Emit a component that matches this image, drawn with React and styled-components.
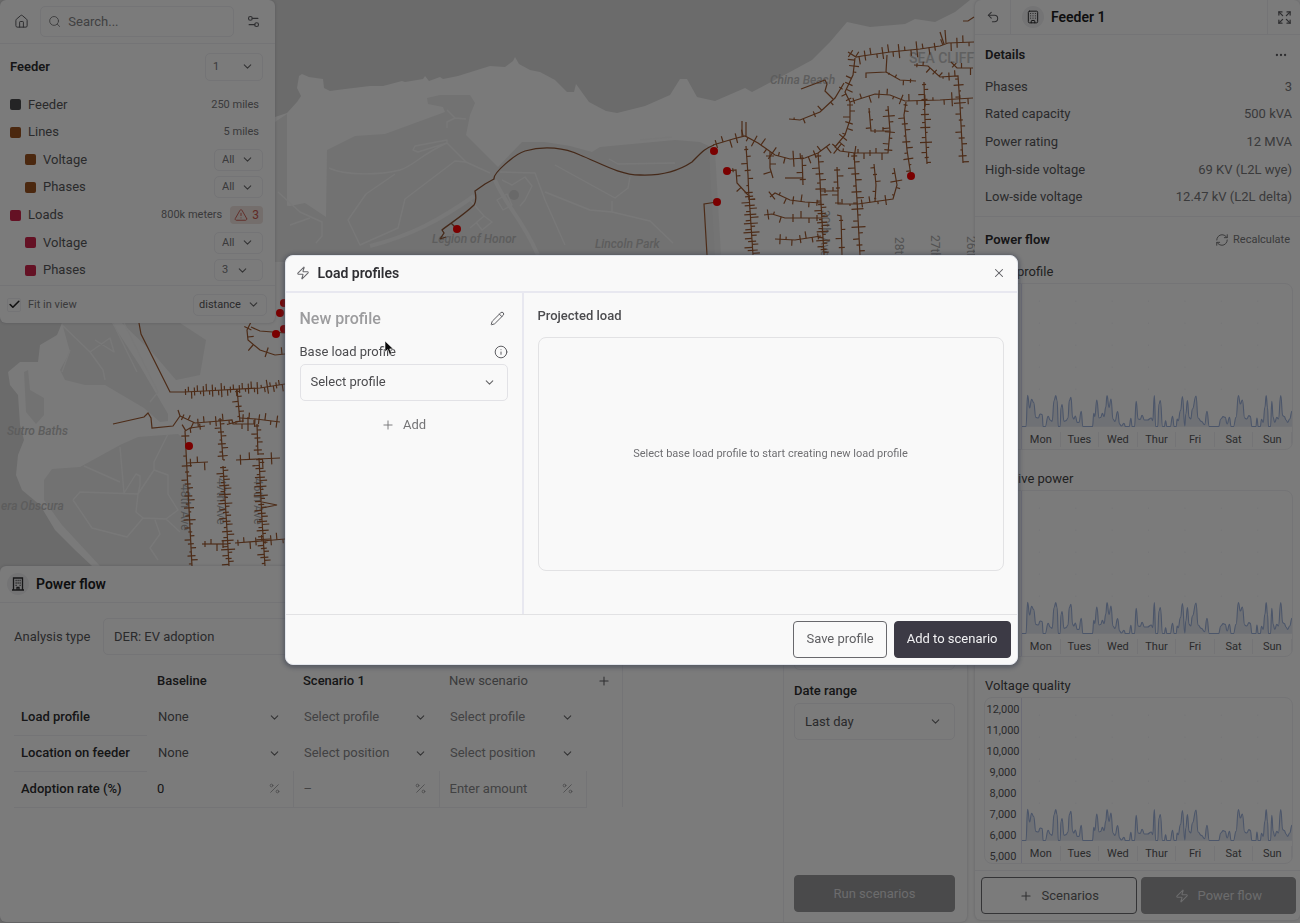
import React from "react";
import styled, { createGlobalStyle, css } from "styled-components";
import {
  House, Search, Settings2, ChevronDown, TriangleAlert, Check, Undo2, Building,
  Expand, Ellipsis, RefreshCw, Plus, Zap, X, Pencil, Info, Percent,
} from "lucide-react";

const color = {
  surface: "#f7f7f7",
  line: "#e8e8ec",
  ink: "#2c2c2e",
  text: "#555557",
  soft: "#747476",
  faint: "#98989a",
  brown: "#96501f",
  red: "#c82248",
};

const GlobalStyle = createGlobalStyle`
  * { box-sizing: border-box; }
  body {
    margin: 0;
    font-family: Roboto, "Liberation Sans", sans-serif;
    font-size: 13px;
    line-height: 16px;
    color: ${color.text};
    background: #d6d6d6;
  }
  button, input, select { font: inherit; color: inherit; margin: 0; }
  h1, h2, h3, dl, dd, ul { margin: 0; padding: 0; }
  h1, h2, h3 { font-weight: 500; }
`;

/* ---------- Page frame ---------- */

const Page = styled.div`
  position: relative;
  display: flex;
  gap: 8px;
  min-height: 100vh;
`;

const MapLayer = styled.svg`
  position: absolute;
  inset: 0;
  width: 100%;
  height: 100%;
  font-family: Roboto, sans-serif;
`;

const Workspace = styled.main`
  position: relative;
  flex: 1;
  min-width: 0;
  display: flex;
  flex-direction: column;
  justify-content: space-between;
  align-items: flex-start;
  padding-bottom: 1px;
`;

const panel = css`
  background: ${color.surface};
  border-radius: 6px;
  box-shadow: 0 0 3px rgba(60, 60, 80, 0.25);
`;

/* ---------- Shared controls ---------- */

const SelectFrame = styled.span`
  display: inline-grid;
  align-items: center;
  vertical-align: middle;
  width: ${(p) => p.$width || "100%"};
  height: ${(p) => p.$height || 37}px;
  font-size: ${(p) => p.$size || 13}px;
  color: ${(p) => p.$color || "inherit"};
  border: ${(p) => (p.$bare ? "0" : `1px solid ${p.$line || color.line}`)};
  border-radius: 5px;

  & > select {
    grid-area: 1 / 1;
    width: 100%;
    height: 100%;
    padding: 0 24px 0 ${(p) => p.$pad || 10}px;
    border: 0;
    background: transparent;
    appearance: none;
  }
  & > svg {
    grid-area: 1 / 1;
    justify-self: end;
    margin-right: ${(p) => p.$gap || 12}px;
    color: #666668;
    pointer-events: none;
  }
`;

function Select({ id, label, value, icon = 13, ...frame }) {
  return (
    <SelectFrame {...frame}>
      <select id={id} aria-label={label} defaultValue={value}>
        <option>{value}</option>
      </select>
      <ChevronDown size={icon} strokeWidth={2} />
    </SelectFrame>
  );
}

const IconButton = styled.button`
  display: grid;
  place-items: center;
  width: ${(p) => p.$width || 24}px;
  height: ${(p) => p.$height || 24}px;
  padding: 0;
  border: 0;
  background: none;
  color: #5c5c60;
`;

const TextButton = styled.button`
  display: inline-flex;
  align-items: center;
  justify-content: center;
  gap: ${(p) => p.$gap || 4}px;
  padding: 0;
  border: 0;
  background: none;
  font-size: ${(p) => p.$size || 13}px;
  color: ${color.soft};
`;

const Button = styled.button`
  display: inline-flex;
  align-items: center;
  justify-content: center;
  gap: 9px;
  height: 37px;
  padding: 0 12px;
  border-radius: 4px;
  border: 1px solid ${(p) => (p.$muted ? "#949496" : p.$solid ? "#3c3a45" : "#68686c")};
  background: ${(p) => (p.$muted ? "#949496" : p.$solid ? "#3c3a45" : "transparent")};
  color: ${(p) => (p.$muted ? "#d8d8da" : p.$solid ? "#f1f1f3" : "#5f5f62")};
`;

/* ---------- Layers panel ---------- */

const LayersPanel = styled.section`
  ${panel}
  width: 275px;
`;

const SearchBar = styled.div`
  display: flex;
  align-items: center;
  height: 44px;
  padding: 0 10px 0 9px;
  gap: 7px;
  border-bottom: 1px solid ${color.line};
`;

const SearchBox = styled.label`
  flex: 1;
  display: flex;
  align-items: center;
  gap: 7px;
  height: 31px;
  padding: 0 7px;
  border: 1px solid ${color.line};
  border-radius: 5px;
  color: ${color.soft};

  & > input {
    width: 100%;
    min-width: 0;
    padding: 0;
    border: 0;
    background: transparent;
    font-size: 13px;
    outline: 0;
  }
  & > input::placeholder { color: #828284; opacity: 1; }
`;

const FeederHead = styled.div`
  display: flex;
  align-items: center;
  justify-content: space-between;
  height: 45px;
  padding: 0 12px 0 10px;
`;

const SectionTitle = styled.h2`
  font-size: 13px;
  font-weight: 600;
  color: ${color.ink};
`;

const LayerList = styled.ul`
  display: grid;
  grid-auto-rows: 1fr;
  height: 193px;
  margin-top: 2px;
  list-style: none;
`;

const LayerItem = styled.li`
  display: flex;
  align-items: center;
  padding: 0 ${(p) => (p.$control ? 12 : 16)}px 0 ${(p) => (p.$nested ? 25 : 10)}px;

  &::before {
    content: "";
    width: 11px;
    height: 11px;
    margin-right: 7px;
    border-radius: 2px;
    background: ${(p) => p.$swatch};
  }
`;

const LayerName = styled.span`
  flex: 1;
`;

const Measure = styled.span`
  font-size: 11px;
  color: ${color.soft};
`;

const Warning = styled.span`
  display: flex;
  align-items: center;
  gap: 4px;
  height: 18px;
  margin-left: 8px;
  padding: 0 4px;
  border-radius: 4px;
  background: #e8dcd8;
  color: #c2564c;
  font-size: 12px;
`;

const PanelFoot = styled.div`
  display: flex;
  align-items: center;
  justify-content: space-between;
  height: 38px;
  margin-top: 1px;
  padding: 0 8px 0 7px;
  border-top: 1px solid ${color.line};
`;

const CheckLabel = styled.label`
  display: flex;
  align-items: center;
  gap: 7px;
  font-size: 11px;
  color: ${color.soft};
`;

const Tick = styled.span`
  display: grid;
  place-items: center;
  width: 14px;
  height: 14px;

  & > * { grid-area: 1 / 1; }
  & > input {
    width: 14px;
    height: 14px;
    appearance: none;
    border: 1px solid ${color.line};
    border-radius: 2px;
  }
  & > svg { color: #222; pointer-events: none; }
`;

const layers = [
  { name: "Feeder", swatch: "#48484a", note: "250 miles" },
  { name: "Lines", swatch: color.brown, note: "5 miles" },
  { name: "Voltage", swatch: color.brown, nested: true, pick: "All", id: "line-voltage" },
  { name: "Phases", swatch: color.brown, nested: true, pick: "All", id: "line-phases" },
  { name: "Loads", swatch: color.red, note: "800k meters", warn: 3 },
  { name: "Voltage", swatch: color.red, nested: true, pick: "All", id: "load-voltage" },
  { name: "Phases", swatch: color.red, nested: true, pick: "3", id: "load-phases" },
];

function Layers() {
  return (
    <LayersPanel>
      <SearchBar>
        <IconButton aria-label="Home"><House size={15} strokeWidth={1.6} /></IconButton>
        <SearchBox>
          <Search size={15} strokeWidth={1.6} />
          <input type="search" placeholder="Search..." aria-label="Search" />
        </SearchBox>
        <IconButton aria-label="Filters"><Settings2 size={15} strokeWidth={1.8} /></IconButton>
      </SearchBar>
      <FeederHead>
        <SectionTitle>Feeder</SectionTitle>
        <Select label="Feeder" value="1" $width="58px" $height={28} $size={11} $pad={7} $gap={8} $color={color.soft} />
      </FeederHead>
      <LayerList>
        {layers.map((l, i) => (
          <LayerItem key={i} $nested={l.nested} $swatch={l.swatch} $control={l.pick || l.warn}>
            <LayerName>{l.name}</LayerName>
            {l.note && <Measure>{l.note}</Measure>}
            {l.warn && <Warning><TriangleAlert size={14} strokeWidth={1.6} />{l.warn}</Warning>}
            {l.pick && (
              <Select label={l.name} id={l.id} value={l.pick} $width="49px" $height={22} $size={11} $pad={7}
                $gap={l.pick === "3" ? 13 : 8} $color={color.soft} />
            )}
          </LayerItem>
        ))}
      </LayerList>
      <PanelFoot>
        <CheckLabel>
          <Tick>
            <input type="checkbox" defaultChecked />
            <Check size={13} strokeWidth={3} />
          </Tick>
          Fit in view
        </CheckLabel>
        <Select label="Fit by" value="distance" $width="74px" $height={22} $size={11} $pad={5} $gap={6} />
      </PanelFoot>
    </LayersPanel>
  );
}

/* ---------- Scenario panel ---------- */

const ScenarioPanel = styled.section`
  ${panel}
  width: 100%;
`;

const PanelHead = styled.header`
  display: flex;
  align-items: center;
  gap: 7px;
  height: 37px;
  padding: 0 7px;
  border-bottom: 1px solid ${color.line};
`;

const Badge = styled.span`
  display: grid;
  place-items: center;
  width: 22px;
  height: 22px;
  border-radius: 50%;
  background: #e8e8ea;
  color: ${color.ink};
`;

const PanelTitle = styled.h1`
  font-size: 14px;
  font-weight: 600;
  line-height: 18px;
  color: #1d1d1f;
`;

const ScenarioBody = styled.div`
  display: grid;
  grid-template-columns: 1fr 184px;
  min-height: 319px;
`;

const ScenarioMain = styled.div`
  min-width: 0;
  padding: 15px 14px;
`;

const AnalysisRow = styled.div`
  display: flex;
  align-items: center;
  gap: 12px;
  margin-bottom: 8px;

  & > label {
    flex: none;
    width: 77px;
    white-space: nowrap;
  }
`;

const ScenarioTable = styled.table`
  border-collapse: collapse;
  table-layout: fixed;
  width: 608px;

  th, td {
    height: 36px;
    padding: 0 0 0 10px;
    text-align: left;
    font-weight: 400;
  }
  thead th { color: ${color.faint}; }
  tbody th {
    padding-left: 7px;
    font-weight: 500;
    color: ${color.ink};
    border-bottom: 1px solid ${color.line};
  }
  tbody tr:last-child td:not(:last-child) {
    border-bottom: 1px solid ${color.line};
    border-right: 1px solid ${color.line};
  }
  tr > :last-child { border-right: 1px solid ${color.line}; }
`;

const ColumnName = styled.span`
  font-weight: ${(p) => (p.$muted ? 400 : 500)};
  color: ${(p) => (p.$muted ? "#747476" : color.ink)};
`;

const Amount = styled.span`
  display: flex;
  align-items: center;
  padding-right: 12px;
  color: ${color.faint};

  & > input {
    flex: 1;
    min-width: 0;
    padding: 0;
    border: 0;
    background: transparent;
    color: ${color.ink};
  }
  & > input::placeholder { color: #848486; opacity: 1; }
`;

const Settings = styled.aside`
  display: flex;
  flex-direction: column;
  padding: 10px 12px 10px 10px;
  border-left: 1px solid ${color.line};
`;

const FieldLabel = styled.label`
  margin-bottom: 4px;
  font-weight: 500;
  color: ${(p) => (p.$soft ? color.text : color.ink)};
`;

const Field = styled.div`
  display: flex;
  flex-direction: column;
  margin-bottom: 13px;
`;

const Spacer = styled.div`
  flex: 1;
`;

function TowerIcon() {
  return (
    <svg width="14" height="14" viewBox="0 0 14 14" fill="none" stroke="currentColor" strokeWidth="1.3">
      <path d="M2.5 13V1h9v12M1 13h12M6 13v-2.5h2V13" />
      <path d="M4.6 3.5h1M6.6 3.5h1M8.6 3.5h1M4.6 6h1M6.6 6h1M8.6 6h1M4.6 8.4h1M8.6 8.4h1" />
    </svg>
  );
}

const pickRows = [
  { name: "Load profile", values: ["None", "Select profile", "Select profile"] },
  { name: "Location on feeder", values: ["None", "Select position", "Select position"] },
];

function Scenarios() {
  return (
    <ScenarioPanel>
      <PanelHead>
        <Badge><TowerIcon /></Badge>
        <PanelTitle>Power flow</PanelTitle>
      </PanelHead>
      <ScenarioBody>
        <ScenarioMain>
          <AnalysisRow>
            <label htmlFor="analysis">Analysis type</label>
            <Select id="analysis" value="DER: EV adoption" $width="360px" />
          </AnalysisRow>
          <ScenarioTable>
            <colgroup>
              <col width="133" /><col width="146" /><col width="146" /><col width="147" /><col width="36" />
            </colgroup>
            <thead>
              <tr>
                <td />
                <th scope="col"><ColumnName>Baseline</ColumnName></th>
                <th scope="col"><ColumnName>Scenario 1</ColumnName></th>
                <th scope="col"><ColumnName $muted>New scenario</ColumnName></th>
                <td><IconButton aria-label="Add scenario" $width={16}><Plus size={14} strokeWidth={1.8} /></IconButton></td>
              </tr>
            </thead>
            <tbody>
              {pickRows.map((r) => (
                <tr key={r.name}>
                  <th scope="row">{r.name}</th>
                  {r.values.map((v, i) => (
                    <td key={i}>
                      <Select label={`${r.name} ${i + 1}`} value={v} $bare $height={34} $pad={1}
                        $color={i ? "#848486" : color.text} />
                    </td>
                  ))}
                  <td />
                </tr>
              ))}
              <tr>
                <th scope="row">Adoption rate (%)</th>
                {[["0", ""], ["", "–"], ["", "Enter amount"]].map(([v, hint], i) => (
                  <td key={i}>
                    <Amount>
                      <input aria-label={`Adoption rate ${i + 1}`} defaultValue={v} placeholder={hint} />
                      <Percent size={13} strokeWidth={1.6} />
                    </Amount>
                  </td>
                ))}
                <td />
              </tr>
            </tbody>
          </ScenarioTable>
        </ScenarioMain>
        <Settings>
          <Field>
            <FieldLabel htmlFor="season">Season</FieldLabel>
            <Select id="season" value="Summer" />
          </Field>
          <Field>
            <FieldLabel htmlFor="range">Date range</FieldLabel>
            <Select id="range" value="Last day" />
          </Field>
          <Spacer />
          <Button $muted>Run scenarios</Button>
        </Settings>
      </ScenarioBody>
    </ScenarioPanel>
  );
}

/* ---------- Feeder details sidebar ---------- */

const Sidebar = styled.aside`
  ${panel}
  position: relative;
  display: flex;
  flex-direction: column;
  width: 325px;
  margin-bottom: 3px;
`;

const SidebarHead = styled.header`
  display: flex;
  align-items: stretch;
  height: 35px;
  border-bottom: 1px solid ${color.line};
`;

const SidebarName = styled.div`
  flex: 1;
  display: flex;
  align-items: center;
  gap: 7px;
  padding: 0 11px;
  border: solid ${color.line};
  border-width: 0 1px;
`;

const SidebarBlock = styled.section`
  padding: 9px 8px 5px 10px;
  border-bottom: 1px solid ${color.line};
`;

const BlockHead = styled.div`
  display: flex;
  align-items: center;
  justify-content: space-between;
  height: 22px;
  padding-right: 3px;
`;

const Facts = styled.dl`
  display: grid;
  grid-auto-rows: 1fr;
  height: 138px;
  margin-top: 7px;
`;

const Fact = styled.div`
  display: flex;
  align-items: center;
  justify-content: space-between;

  & > dd { color: ${color.soft}; }
`;

const Charts = styled.section`
  display: flex;
  flex-direction: column;
  padding: 12px 7px 6px 9px;

  & > ${BlockHead} { margin-bottom: 9px; padding-left: 1px; }
`;

const ChartName = styled.h3`
  height: 23px;
  padding-left: 1px;
  font-size: 13px;
  font-weight: 400;
  line-height: 23px;
  color: #434345;
`;

const ChartFrame = styled.div`
  display: grid;
  grid-template-columns: 37px 1fr;
  height: 167px;
  margin-bottom: ${(p) => (p.$last ? 0 : 17)}px;
  border: 1px solid ${color.line};
  border-radius: 8px;
  overflow: hidden;
`;

const Scale = styled.div`
  min-height: 0;
  padding-top: 1px;
  border-right: 1px solid #d9d9ec;
  font-size: 11px;
  line-height: 21px;
  text-align: center;
`;

const Plot = styled.div`
  display: flex;
  flex-direction: column;
  min-width: 0;

  & > svg { width: 100%; height: 143px; }
`;

const Days = styled.div`
  display: grid;
  grid-template-columns: repeat(7, 1fr);
  padding-top: 5px;
  font-size: 11px;
  line-height: 15px;
  text-align: center;

  & > span { border-right: 1px solid ${color.line}; }
`;

const SidebarFoot = styled.footer`
  display: grid;
  grid-template-columns: 1fr 1fr;
  gap: 4px;
  margin-top: auto;
  padding: 6px 4px 6px 6px;
  border-top: 1px solid ${color.line};
`;

const load = [
  [33, 168], [45, 168], [50, 74], [56, 112], [62, 86], [68, 95], [75, 140], [82, 142], [88, 130], [94, 132],
  [97, 168], [103, 168], [112, 137], [118, 148], [124, 152], [130, 90], [135, 75], [139, 90], [143, 168],
  [148, 168], [151, 110], [154, 102], [160, 152], [166, 150], [172, 142], [176, 90], [181, 80], [186, 140],
  [190, 145], [194, 136], [200, 155], [205, 155], [212, 122], [217, 168], [246, 168], [250, 128], [253, 138],
  [259, 88], [266, 142], [271, 140], [276, 128], [281, 138], [286, 110], [290, 75], [296, 110], [302, 85],
  [308, 145], [314, 152], [322, 123], [328, 160], [333, 166], [341, 158], [346, 168], [357, 168], [362, 143],
  [366, 168], [373, 168], [378, 92], [384, 145], [390, 146], [396, 134], [403, 148], [412, 148], [424, 142],
  [428, 150], [433, 75], [437, 168], [443, 168], [447, 100], [451, 90], [458, 168], [463, 168], [467, 150],
  [471, 168], [481, 168], [488, 137], [493, 168], [499, 168], [502, 145], [505, 150], [512, 120], [518, 78],
  [525, 166], [528, 130], [533, 90], [538, 140], [543, 145], [548, 115], [559, 76], [565, 142], [575, 152],
  [585, 162], [592, 122], [599, 168], [627, 168], [634, 145], [641, 138], [647, 140], [653, 160], [660, 140],
  [665, 168], [672, 168], [680, 140], [687, 75], [693, 100], [699, 88], [706, 142], [712, 145], [719, 135],
  [723, 137], [728, 168], [740, 168], [743, 142], [747, 168], [753, 168], [757, 146], [762, 155], [767, 110],
  [771, 75], [775, 110], [778, 168], [784, 168], [788, 92], [792, 140], [797, 155], [803, 140], [808, 145],
  [815, 75], [821, 135], [826, 138], [831, 148], [836, 155], [842, 145], [849, 122],
];

const loadCurve = load.reduce((d, [x, y], i) => {
  if (!i) return `M${x} ${y}`;
  const [px, py] = load[i - 1];
  const mid = (px + x) / 2;
  return `${d}C${mid} ${py} ${mid} ${y} ${x} ${y}`;
}, "");

const gridDots = [0, 1, 2, 3, 4].flatMap((r) => [0, 1, 2, 3, 4, 5, 6].map((c) => [84 + c * 110, -210 + r * 66]));

const kilo = ["700", "600", "500", "400", "300", "200", "100", "0"];
const volts = ["12,000", "11,000", "10,000", "9,000", "8,000", "7,000", "6,000", "5,000"];

function Chart({ name, scale, last }) {
  return (
    <>
      <ChartName>{name}</ChartName>
      <ChartFrame $last={last}>
        <Scale>
          {scale.map((v) => (
            <div key={v}>{v}</div>
          ))}
        </Scale>
        <Plot>
          <svg viewBox="33 -260 816 429" preserveAspectRatio="none" aria-hidden="true">
            {gridDots.map(([x, y]) => <rect key={`${x}.${y}`} x={x} y={y} width="3" height="3" fill="#e4e4ea" />)}
            <path d={`${loadCurve}V168H33Z`} fill="#dfe2ea" />
            <path d={loadCurve} fill="none" stroke="#98acd4" strokeWidth="3.4" />
          </svg>
          <Days>
            {["Mon", "Tues", "Wed", "Thur", "Fri", "Sat", "Sun"].map((d) => <span key={d}>{d}</span>)}
          </Days>
        </Plot>
      </ChartFrame>
    </>
  );
}

const facts = [
  ["Phases", "3"],
  ["Rated capacity", "500 kVA"],
  ["Power rating", "12 MVA"],
  ["High-side voltage", "69 KV (L2L wye)"],
  ["Low-side voltage", "12.47 kV (L2L delta)"],
];

function Details() {
  return (
    <Sidebar>
      <SidebarHead>
        <IconButton aria-label="Back" $width={35} $height={34}><Undo2 size={14} strokeWidth={1.8} /></IconButton>
        <SidebarName>
          <Badge><Building size={14} strokeWidth={1.7} /></Badge>
          <PanelTitle as="h2">Feeder 1</PanelTitle>
        </SidebarName>
        <IconButton aria-label="Expand" $width={32} $height={34}><Expand size={15} strokeWidth={2} /></IconButton>
      </SidebarHead>
      <SidebarBlock>
        <BlockHead>
          <SectionTitle>Details</SectionTitle>
          <IconButton aria-label="More" $width={16}><Ellipsis size={14} /></IconButton>
        </BlockHead>
        <Facts>
          {facts.map(([k, v]) => <Fact key={k}><dt>{k}</dt><dd>{v}</dd></Fact>)}
        </Facts>
      </SidebarBlock>
      <Charts>
        <BlockHead>
          <SectionTitle>Power flow</SectionTitle>
          <TextButton $size={11}><RefreshCw size={14} strokeWidth={1.7} />Recalculate</TextButton>
        </BlockHead>
        <Chart name="Load profile" scale={kilo} />
        <Chart name="Reactive power" scale={kilo} />
        <Chart name="Voltage quality" scale={volts} last />
      </Charts>
      <SidebarFoot>
        <Button><Plus size={14} strokeWidth={1.8} />Scenarios</Button>
        <Button $muted><Zap size={14} strokeWidth={1.8} />Power flow</Button>
      </SidebarFoot>
    </Sidebar>
  );
}

/* ---------- Map ---------- */

/* Each feeder run is [points, spacing of its service drops, drop length]. */
const runs = [
  ["713,145 733,139 745,136 758,143 775,155 790,159 805,158 818,153 830,144", 7, 6],
  ["818,153 820,180 821,203", 6, 5],
  ["821,203 805,202 790,200 775,193 770,197", 8, 5],
  ["821,203 824,255", 3, 5],
  ["821,218 785,218 772,214 764,215", 8, 5],
  ["821,236 795,240 775,239", 6, 5],
  ["746,146 748,175 749,200", 7, 4],
  ["749,195 753,255", 3, 6],
  ["727,171 736,170 737,183 748,195", 12, 4],
  ["742,136 742,121", 0, 0],
  ["746,137 746,122", 0, 0],
  ["802,155 803,185", 7, 4],
  ["785,178 803,178", 0, 0],
  ["770,152 770,168 773,178", 8, 6],
  ["717,202 704,204 707,255", 0, 0],
  ["850,102 845,92 853,75 855,58", 6, 5],
  ["848,52 856,57 862,56 890,52 920,49 940,46 948,43 974,42", 6, 6],
  ["944,44 940,32", 0, 0],
  ["946,43 945,30", 0, 0],
  ["801,89 825,80 827,84 825,91 833,99", 0, 0],
  ["844,83 835,98 820,112 800,120 789,119", 12, 4],
  ["850,102 850,120 845,135 835,147 840,151 855,153 888,153 890,131 888,106", 6, 5],
  ["869,108 871,131 890,131", 8, 3],
  ["850,102 875,94 890,95 905,101 940,100 973,98", 8, 5],
  ["906,102 904,115 907,150 911,176", 6, 4],
  ["924,82 925,120 927,164", 5, 4],
  ["914,65 928,66 940,77 958,76 960,105 963,163", 6, 4],
  ["887,55 886,72 866,73 866,78", 0, 0],
  ["886,72 900,80 916,81", 7, 3],
  ["854,153 857,200 860,255", 6, 5],
  ["821,191 838,191 838,204 858,204 893,199 897,185 894,168", 8, 4],
  ["838,191 837,167", 6, 4],
  ["875,202 876,185 874,164", 7, 3],
  ["837,215 841,216 842,255", 9, 4],
  ["951,62 957,68 973,68", 9, 5],
  ["963,21 968,21 974,17", 0, 0],
  ["139,323 141,334 170,392 184,392", 0, 0],
  ["184,392 205,391 260,388 285,384", 3, 5],
  ["251,322 247,330 248,340 260,350 275,355 285,354", 14, 6],
  ["251,327 260,331 285,333", 0, 0],
  ["237,389 240,422", 5, 4],
  ["113,424 144,417 148,413 151,418 152,428 173,426 180,416 178,410", 0, 0],
  ["180,416 195,423 220,421 232,420 233,424 255,424", 6, 5],
  ["240,418 256,419 280,422", 6, 6],
  ["205,426 190,428 185,431 187,470", 10, 5],
  ["187,470 192,566", 4, 4],
  ["220,418 223,460", 4, 4],
  ["223,466 227,530 229,566", 3, 5],
  ["257,424 258,455", 4, 4],
  ["259,458 262,520 265,566", 3, 5],
  ["187,463 208,462", 7, 6],
  ["236,460 258,459 280,458", 9, 7],
  ["202,544 228,544", 6, 5],
  ["235,543 262,541 285,539", 6, 5],
  ["262,502 277,505 262,508", 0, 0],
];

function drops(points, gap, size) {
  if (!gap) return "";
  const pts = points.split(" ").map((p) => p.split(",").map(Number));
  let d = "";
  let n = 0;
  for (let i = 1; i < pts.length; i++) {
    const [ax, ay] = pts[i - 1];
    const [bx, by] = pts[i];
    const len = Math.hypot(bx - ax, by - ay);
    const ux = (bx - ax) / len;
    const uy = (by - ay) / len;
    for (let t = gap / 2; t < len; t += gap, n++) {
      const s = size + ((n * 7) % 5) - 2;
      const a = n % 3 === 0 ? -s : 0;
      const b = n % 3 === 1 ? 0 : s;
      const e = a === b ? -s : b;
      const x = ax + ux * t;
      const y = ay + uy * t;
      d += `M${(x - uy * a).toFixed(1)} ${(y + ux * a).toFixed(1)}L${(x - uy * e).toFixed(1)} ${(y + ux * e).toFixed(1)}`;
    }
  }
  return d;
}

const faults = [
  [457, 229], [714, 151], [727, 171], [717, 202], [911, 176],
  [189, 446], [276, 334], [280, 313], [284, 303], [284, 329],
];

const LAND =
  "M275 117L287 113L297 102L301 96L297 88L299 76L302 74L309 77L323 79L324 88L330 91L345 89L370 86L383 86L402 81L405 82L423 79L425 76L429 81L440 77L443 79L458 76L490 66L505 67L513 61L515 57L519 64L530 70L540 72L555 80L567 92L574 92L576 84L589 102L606 111L617 113L645 106L670 95L680 79L687 79L697 97L715 101L745 88L752 92L790 72L812 60L830 42L847 22L870 27L905 24L915 19L935 22L955 12L970 0H1300V923H400L92 566L75 550L55 530L40 505L22 490L16 475L18 455L24 440L20 425L18 395L10 385L8 372L20 362L38 362L40 345L57 335L62 323Z";

const PARKS =
  "M327 150L355 136L385 134L445 112L443 107L428 104L427 98L440 95L470 95L475 103L470 115L466 135L498 167L522 142L545 142L570 146L592 152L600 147L675 140L700 142L713 148L718 262H275V205L290 206L305 203L326 217Z" +
  "M62 323H112L140 366L168 414V421L160 422L144 408L105 385L85 385L65 380L60 370L70 352Z" +
  "M122 323H180L206 340L200 375L176 380L152 352Z" +
  "M44 480L52 469L80 467L120 445L138 437L178 434L185 440L192 566H100L62 525L44 500Z" +
  "M24 372L28 370L30 390L44 398V415L36 424L26 412Z";

const ROADS =
  "M329 168C345 176 380 175 400 170C415 165 420 155 447 143V140L415 146L413 150L418 152L447 143L466 162L490 173" +
  "M466 162L455 161L430 180L405 199L398 228L360 245L348 220L366 194L395 174" +
  "M447 128V122L455 118L447 110M455 118L466 119" +
  "M500 172L535 173L545 200L565 245M555 165L615 198L628 188L630 177M545 192L590 210L612 212V201M612 212L650 221L673 243" +
  "M609 159L618 164L675 163M640 140L672 137M470 228L484 216L492 222L482 230L476 222M484 216L470 200M497 200L507 194L512 205L503 210ZM502 180L512 185L525 177L532 186L525 200L520 206" +
  "M278 192L300 212L322 222V236L316 243M290 225L310 218" +
  "M73 500L80 492L138 494L140 485V476L136 474L124 493M120 447L124 493M84 466L120 482M168 434L154 462V470L138 494L136 512L143 518L166 519L178 510L168 494V475L154 470M73 500L92 528L127 537L143 518M155 520L160 534L150 548L158 560M166 519L180 532" +
  "M62 325L90 352L103 370L105 380M90 352L110 338L114 352L95 340M113 323L137 372M124 323L158 392L150 402M70 350L62 372";

function ServiceMap() {
  return (
    <MapLayer viewBox="0 0 1300 923" preserveAspectRatio="xMinYMin slice" aria-hidden="true">
      <rect width="1300" height="923" fill="#d6d6d6" />
      <path d={LAND} fill="#f4f4f4" />
      <path d={PARKS} fill="#e4e4e4" />
      <path d="M275 122L287 114V262H275Z" fill="#e4e4e4" />
      <circle cx="514" cy="195" r="5" fill="#d2d2d2" />
      <path d={ROADS} fill="none" stroke="#f1f1f1" strokeWidth="1.4" strokeLinejoin="round" />
      <path d="M370 246C410 236 440 220 474 196M495 180C505 205 520 215 538 255" fill="none" stroke="#f0f0f0" strokeWidth="4" />
      <path d="M712 150L718 255" fill="none" stroke="#e9e9e9" strokeWidth="6" />
      <g fill="#bababa" fontSize="12" fontStyle="italic" fontWeight="500">
        <text x="770" y="84">China Beach</text>
        <text x="432" y="243">Legion of Honor</text>
        <text x="595" y="248">Lincoln Park</text>
        <text x="7" y="435">Sutro Baths</text>
        <text x="1" y="510">era Obscura</text>
      </g>
      <text x="909" y="63" fontSize="14" fill="#c0c0c0" fontWeight="500">SEA CLIFF</text>
      <g fill="#a4a4a4" fontSize="12">
        <text transform="translate(181 484) rotate(90)">48th Ave</text>
        <text transform="translate(217 478) rotate(90)">47th Ave</text>
        <text transform="translate(254 478) rotate(90)">46th Ave</text>
        <text transform="translate(821 210) rotate(90)">30th Ave</text>
        <text transform="translate(895 237) rotate(90)">28th Ave</text>
        <text transform="translate(931 235) rotate(90)">27th Ave</text>
        <text transform="translate(967 236) rotate(90)">26th Ave</text>
      </g>
      <path
        d="M440 239L444 233L442 230C448 225 465 214 474 205C477 201 476 196 475 191L485 184L494 179C493 173 515 154 525 151C545 145 565 148 580 155C600 163 620 175 640 175C665 176 680 170 692 162C702 152 704 149 714 145M451 223L457 229M440 239L446 237"
        fill="none" stroke="#8a5232" strokeWidth="1.3"
      />
      <g fill="none" stroke="#9a5830" strokeWidth="1.2">
        {runs.map(([points, gap, size], i) => (
          <React.Fragment key={i}>
            <polyline points={points} />
            <path d={drops(points, gap, size)} />
          </React.Fragment>
        ))}
      </g>
      {faults.map(([x, y]) => <circle key={`${x}.${y}`} cx={x} cy={y} r="4" fill="#f40000" />)}
    </MapLayer>
  );
}

/* ---------- Load profile dialog ---------- */

const Backdrop = styled.div`
  position: fixed;
  inset: 0;
  display: grid;
  place-items: center;
  padding: 14px 14px 18px 16px;
  background: rgba(0, 0, 0, 0.5);
`;

const Dialog = styled.section`
  position: relative;
  display: flex;
  flex-direction: column;
  width: 100%;
  max-width: 733px;
  min-height: 410px;
  border: 1px solid #e3e6ec;
  border-radius: 8px;
  background: #f9f9f9;
  color: #4c4c4f;
  box-shadow: 0 1px 4px 2px rgba(60, 66, 80, 0.55);
`;

const DialogHead = styled.header`
  display: flex;
  align-items: center;
  gap: 8px;
  height: 37px;
  padding: 0 6px 0 10px;
  border-bottom: 2px solid #e8e8f0;
  color: #68686c;

  & > ${PanelTitle} { flex: 1; color: #2f2f33; }
`;

const DialogBody = styled.div`
  flex: 1;
  display: grid;
  grid-template-columns: 238px 1fr;
`;

const ProfileForm = styled.div`
  display: flex;
  flex-direction: column;
  padding: 13px 14px;
  border-right: 2px solid #e8e8f0;
`;

const NameRow = styled.div`
  display: flex;
  align-items: center;
  height: 26px;
  margin-bottom: 10px;

  & > input {
    flex: 1;
    min-width: 0;
    padding: 0;
    border: 0;
    background: transparent;
    font-size: 16px;
    font-weight: 500;
    line-height: 20px;
  }
  & > input::placeholder { color: #9c9c9e; opacity: 1; }
`;

const LabelRow = styled.div`
  display: flex;
  align-items: center;
  justify-content: space-between;
  height: 20px;
  margin-bottom: 2px;

  & > ${FieldLabel} { margin: 0; font-weight: 400; color: #4c4c4f; }
`;

const AddRow = styled.div`
  display: flex;
  justify-content: center;
  margin-top: 16px;
`;

const Projection = styled.div`
  display: flex;
  flex-direction: column;
  padding: 15px 13px 43px 14px;
`;

const ProjectionTitle = styled.h3`
  margin-bottom: 13px;
  font-size: 13px;
  line-height: 16px;
`;

const EmptyState = styled.div`
  flex: 1;
  display: grid;
  place-items: center;
  border: 1px solid #e2e2e4;
  border-radius: 8px;
  font-size: 11px;
  color: #6f6f72;
`;

const DialogFoot = styled.footer`
  display: flex;
  justify-content: flex-end;
  gap: 7px;
  padding: 6px;
  border-top: 1px solid #e2e2e4;
`;

const Pointer = styled.svg`
  position: absolute;
  top: 84px;
  left: 98px;
  pointer-events: none;
`;

function LoadProfiles() {
  return (
    <Backdrop>
      <Dialog role="dialog" aria-modal="true" aria-labelledby="profiles-title">
        <DialogHead>
          <Zap size={14} strokeWidth={1.8} />
          <PanelTitle as="h2" id="profiles-title">Load profiles</PanelTitle>
          <IconButton aria-label="Close"><X size={14} strokeWidth={1.8} /></IconButton>
        </DialogHead>
        <DialogBody>
          <ProfileForm>
            <NameRow>
              <input placeholder="New profile" aria-label="Profile name" />
              <IconButton aria-label="Rename" $width={20}><Pencil size={15} strokeWidth={1.6} /></IconButton>
            </NameRow>
            <LabelRow>
              <FieldLabel $soft htmlFor="base-profile">Base load profile</FieldLabel>
              <IconButton aria-label="About base profiles" $width={14}><Info size={14} strokeWidth={1.7} /></IconButton>
            </LabelRow>
            <Select id="base-profile" value="Select profile" $line="#e2e2e6" $gap={11} />
            <AddRow>
              <TextButton $gap={8}><Plus size={14} strokeWidth={1.6} />Add</TextButton>
            </AddRow>
          </ProfileForm>
          <Projection>
            <ProjectionTitle>Projected load</ProjectionTitle>
            <EmptyState>Select base load profile to start creating new load profile</EmptyState>
          </Projection>
        </DialogBody>
        <DialogFoot>
          <Button>Save profile</Button>
          <Button $solid>Add to scenario</Button>
        </DialogFoot>
        <Pointer width="11" height="16" viewBox="0 0 11 16" aria-hidden="true">
          <path d="M1 1v11l2.6-2.4 2 4.8 2.1-.9-2-4.6h3.6z" fill="#0a0a0a" stroke="#f9f9f9" strokeWidth="0.6" />
        </Pointer>
      </Dialog>
    </Backdrop>
  );
}

export default function App() {
  return (
    <>
      <GlobalStyle />
      <Page>
        <ServiceMap />
        <Workspace>
          <Layers />
          <Scenarios />
        </Workspace>
        <Details />
      </Page>
      <LoadProfiles />
    </>
  );
}
